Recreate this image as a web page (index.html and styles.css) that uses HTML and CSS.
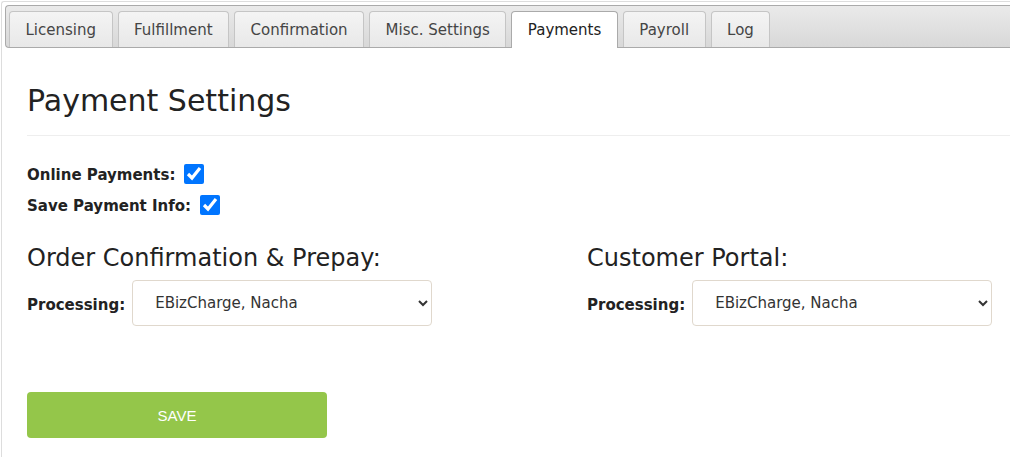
FILE: index.html
```
<!DOCTYPE html>
<html>
<head>
	<title>Payment Settings</title>
	<link rel="stylesheet" href="styles.css">
</head>
<body>
	<div class="tabs">
		<ul class="tab-nav">
			<li class="tab">Licensing</li>
			<li class="tab">Fulfillment</li>
			<li class="tab">Confirmation</li>
			<li class="tab">Misc. Settings</li>
			<li class="tab active">Payments</li>
			<li class="tab">Payroll</li>
			<li class="tab">Log</li>
		</ul>

		<div class="tab-panel">
			<h1>Payment Settings</h1>
			<hr>

			<div class="check-row">
				<label for="online-payments">Online Payments:</label>
				<input type="checkbox" id="online-payments" checked>
			</div>
			<div class="check-row">
				<label for="save-info">Save Payment Info:</label>
				<input type="checkbox" id="save-info" checked>
			</div>

			<div class="columns">
				<div class="column">
					<h2>Order Confirmation &amp; Prepay:</h2>
					<div class="field">
						<label for="order-processing">Processing:</label>
						<select id="order-processing">
							<option>EBizCharge, Nacha</option>
						</select>
					</div>
				</div>
				<div class="column">
					<h2>Customer Portal:</h2>
					<div class="field">
						<label for="portal-processing">Processing:</label>
						<select id="portal-processing">
							<option>EBizCharge, Nacha</option>
						</select>
					</div>
				</div>
			</div>

			<button class="save-btn" type="button">SAVE</button>
		</div>
	</div>
</body>
</html>
```

FILE: styles.css
```
body {
	margin: 0;
	font-family: "DejaVu Sans", Verdana, sans-serif;
	color: #222;
	background: #fff;
	overflow: hidden;
}
.tabs {
	box-sizing: border-box;
	margin: 1px 0 0 1px;
	width: calc(100% - 1px);
	height: 470px;
	padding: 3px 0 3px 3px;
	border: 1px solid #ddd;
	border-right: none;
	border-radius: 3px 0 0 3px;
}
.tab-nav {
	display: flex;
	list-style: none;
	margin: 0;
	padding: 5px 0 0 3px;
	height: 36px;
	border: 1px solid #aaa;
	border-right: none;
	border-radius: 4px 0 0 4px;
	background: linear-gradient(#eaeaea, #d8d8d8);
}
.tab {
	height: 35px;
	line-height: 36px;
	padding: 0 15.5px;
	margin-right: 5px;
	font-size: 15px;
	color: #454545;
	border: 1px solid #c5c5c5;
	border-bottom: none;
	border-radius: 4px 4px 0 0;
	background: linear-gradient(#f4f4f4, #e8e8e8);
}
.tab.active {
	height: 36px;
	background: #fff;
	color: #222;
	border-color: #aaa;
}
.tab-panel {
	padding: 0 0 0 22px;
}
h1 {
	font-size: 30px;
	font-weight: normal;
	margin: 35px 0 0;
	line-height: 36px;
}
hr {
	border: none;
	border-top: 1px solid #eee;
	margin: 16px 0 22px;
}
.check-row {
	display: flex;
	align-items: center;
	height: 31px;
}
.check-row label, .field label {
	font-size: 15px;
	font-weight: bold;
	margin-top: 3px;
}
.check-row input {
	width: 20px;
	height: 20px;
	margin: 0 0 0 9px;
	accent-color: #0075ff;
}
.columns {
	display: grid;
	grid-template-columns: 560px 1fr;
	margin-top: 23px;
}
h2 {
	font-size: 24px;
	font-weight: normal;
	margin: 0 0 7px;
	line-height: 30px;
}
.field {
	display: flex;
	align-items: center;
}
.field select {
	width: 300px;
	height: 46px;
	margin-left: 7px;
	padding: 0 12px 0 18px;
	font-family: "DejaVu Sans", Verdana, sans-serif;
	font-size: 15px;
	color: #333;
	background: #fff;
	border: 1px solid #e0d8cd;
	border-radius: 4px;
}
.save-btn {
	display: block;
	width: 300px;
	height: 46px;
	margin-top: 66px;
	font-family: "Liberation Sans", Arial, sans-serif;
	font-size: 15px;
	color: #fff;
	background: #94c64a;
	border: none;
	border-radius: 4px;
}
```
